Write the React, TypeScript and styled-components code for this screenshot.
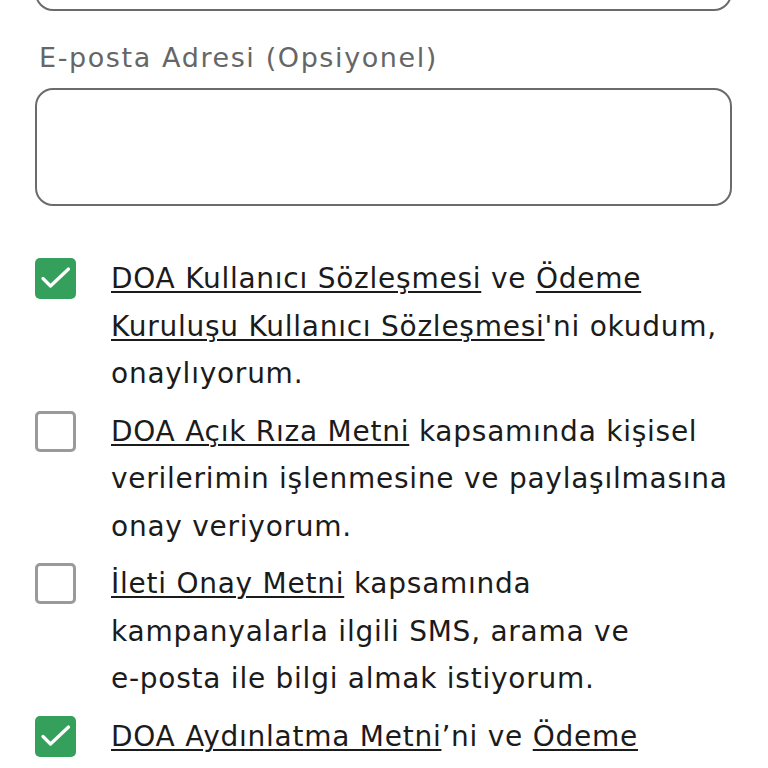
import React from 'react';
import styled, { createGlobalStyle } from 'styled-components';

const Global = createGlobalStyle`
  html, body { margin: 0; padding: 0; background: #ffffff; }
  body { font-family: "DejaVu Sans", "Liberation Sans", sans-serif; overflow: hidden; }
`;

const Page = styled.div`
  width: 768px;
  height: 768px;
  overflow: hidden;
  box-sizing: border-box;
  padding: 0 36px 0 35px;
`;

const Field = styled.div`
  display: flex;
  flex-direction: column;
`;

const Label = styled.div`
  font-size: 27px;
  letter-spacing: 1.6px;
  color: #666666;
  line-height: 40px;
  margin: 27px 0 10px 4px;
`;

const Input = styled.div<{ $scrolled?: boolean }>`
  height: 118px;
  box-sizing: border-box;
  border: 2px solid #6b6b6b;
  border-radius: 18px;
  margin-top: ${p => (p.$scrolled ? '-107px' : '0')};
`;

const Consents = styled.div`
  display: flex;
  flex-direction: column;
  gap: 10px;
  margin-top: 49px;
`;

const Row = styled.label`
  display: flex;
  align-items: flex-start;
  gap: 35px;
`;

const Box = styled.span<{ $checked: boolean }>`
  flex: 0 0 auto;
  width: 41px;
  height: 41px;
  box-sizing: border-box;
  margin-top: 3px;
  border-radius: 5px;
  display: flex;
  align-items: center;
  justify-content: center;
  background: ${p => (p.$checked ? '#34a05c' : '#ffffff')};
  border: ${p => (p.$checked ? 'none' : '3px solid #9a9a9a')};
`;

const Text = styled.div`
  font-size: 28px;
  letter-spacing: 0.75px;
  line-height: 47.5px;
  color: #1b1b1b;
  flex: 1;
`;

const Link = styled.span`
  text-decoration: underline;
  text-underline-offset: 3px;
  text-decoration-thickness: 2px;
`;

const NoWrap = styled.span`
  white-space: nowrap;
`;

const Check = () => (
  <svg width="41" height="41" viewBox="0 0 41 41" fill="none" stroke="#fff" strokeWidth="3.2" strokeLinecap="round" strokeLinejoin="round">
    <path d="M8 20.5l7.5 7.5L33.5 11" />
  </svg>
);

const Consent = ({ checked, children }: { checked: boolean; children: React.ReactNode }) => (
  <Row>
    <Box $checked={checked}>{checked && <Check />}</Box>
    <Text>{children}</Text>
  </Row>
);

export default function App() {
  return (
    <>
      <Global />
      <Page>
        <Input $scrolled />
        <Field>
          <Label>E-posta Adresi (Opsiyonel)</Label>
          <Input />
        </Field>
        <Consents>
          <Consent checked>
            <Link>DOA Kullanıcı Sözleşmesi</Link> ve <Link>Ödeme Kuruluşu Kullanıcı Sözleşmesi</Link>'ni okudum, onaylıyorum.
          </Consent>
          <Consent checked={false}>
            <Link>DOA Açık Rıza Metni</Link> kapsamında kişisel verilerimin işlenmesine ve paylaşılmasına onay veriyorum.
          </Consent>
          <Consent checked={false}>
            <Link>İleti Onay Metni</Link> kapsamında kampanyalarla ilgili SMS, arama ve <NoWrap>e-posta</NoWrap> ile bilgi almak istiyorum.
          </Consent>
          <Consent checked>
            <Link>DOA Aydınlatma Metni</Link>’ni ve <Link>Ödeme Kuruluşu Kullanıcı Sözleşmesi</Link>’ni okudum, onaylıyorum.
          </Consent>
        </Consents>
      </Page>
    </>
  );
}
